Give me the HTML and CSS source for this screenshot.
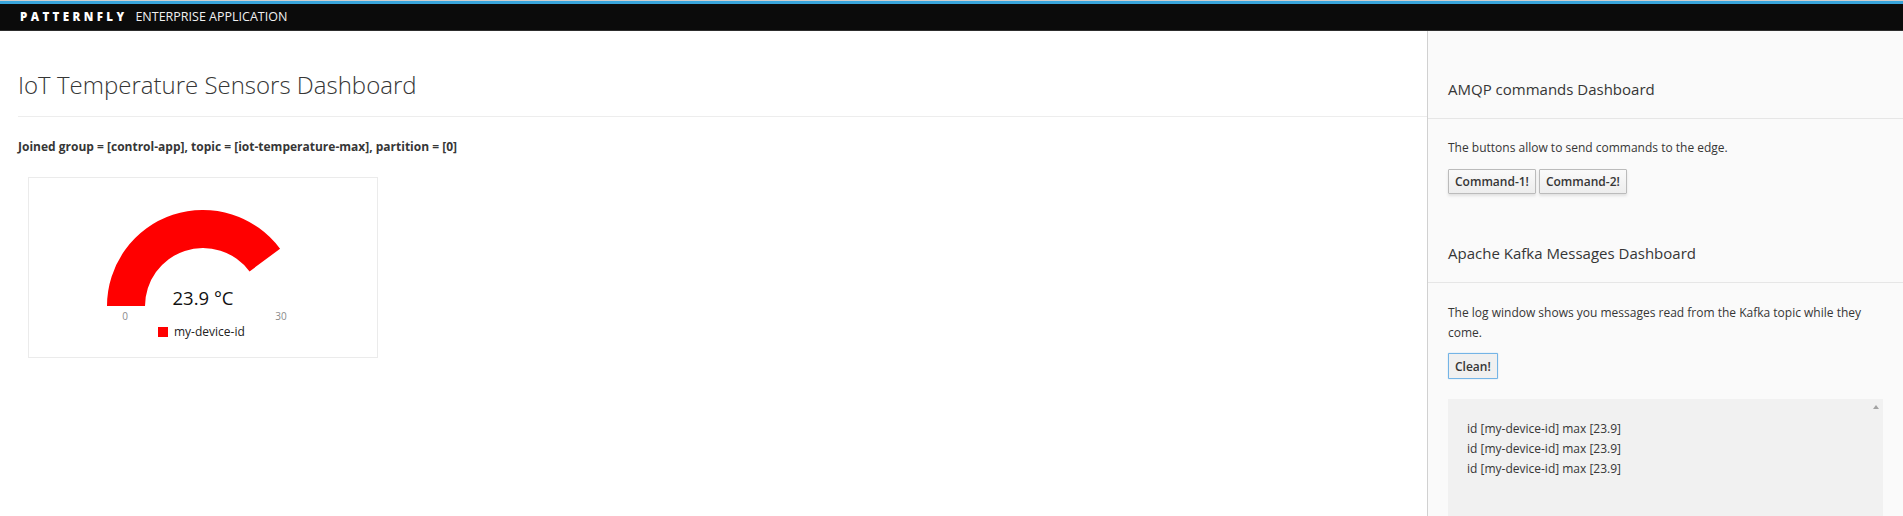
FILE: index.html
```html
<!DOCTYPE html>
<html lang="en">
<head>
<meta charset="utf-8">
<title>IoT Temperature Sensors Dashboard</title>
<link rel="stylesheet" href="styles.css">
</head>
<body>
<header class="navbar">
  <span class="brand-name">PATTERNFLY</span><span class="brand-app">ENTERPRISE APPLICATION</span>
</header>
<div class="layout">
  <main class="main">
    <h1 class="page-title">IoT Temperature Sensors Dashboard</h1>
    <p class="joined">Joined group = [control-app], topic = [iot-temperature-max], partition = [0]</p>
    <div class="gauge-card">
      <svg class="gauge" width="348" height="179" viewBox="0 0 348 179">
        <path d="M78,128 A96,96 0 0 1 251.07,70.75 L220.56,93.41 A58,58 0 0 0 116,128 Z" fill="#ff0000"/>
        <text class="gauge-value" x="174" y="127" text-anchor="middle">23.9 °C</text>
        <text class="gauge-label" x="96" y="142" text-anchor="middle">0</text>
        <text class="gauge-label" x="252" y="142" text-anchor="middle">30</text>
        <rect x="129" y="149" width="10" height="10" fill="#ff0000"/>
        <text class="gauge-legend" x="145" y="158">my-device-id</text>
      </svg>
    </div>
  </main>
  <aside class="sidebar">
    <section class="side-section">
      <h2 class="side-title">AMQP commands Dashboard</h2>
      <div class="side-body">
        <p class="side-text">The buttons allow to send commands to the edge.</p>
        <div class="btn-row">
          <button class="btn">Command-1!</button>
          <button class="btn">Command-2!</button>
        </div>
      </div>
    </section>
    <section class="side-section kafka">
      <h2 class="side-title">Apache Kafka Messages Dashboard</h2>
      <div class="side-body">
        <p class="side-text">The log window shows you messages read from the Kafka topic while they come.</p>
        <div class="btn-row">
          <button class="btn btn-focus">Clean!</button>
        </div>
        <div class="log">
          <span class="scroll-up"></span>
          <div class="log-line">id [my-device-id] max [23.9]</div>
          <div class="log-line">id [my-device-id] max [23.9]</div>
          <div class="log-line">id [my-device-id] max [23.9]</div>
        </div>
      </div>
    </section>
  </aside>
</div>
</body>
</html>
```
FILE: styles.css
```css
html, body {
  margin: 0;
  padding: 0;
}
body {
  font-family: "Open Sans", "Noto Sans", "Liberation Sans", sans-serif;
  font-size: 12px;
  color: #363636;
  background: #fff;
  overflow: hidden;
}
.navbar {
  display: flex;
  align-items: center;
  height: 26px;
  padding-left: 20px;
  background: #0b0b0b;
  border-top: 3px solid #39a5dc;
  border-bottom: 1px solid #2d2d2d;
  box-shadow: 0 -1px 0 #cfcfcf;
  margin-top: 1px;
}
.brand-name {
  color: #fff;
  font-weight: 800;
  font-size: 11.5px;
  letter-spacing: 3.4px;
  line-height: 1;
}
.brand-app {
  color: #f0f0f0;
  font-size: 12.5px;
  font-weight: 400;
  margin-left: 8px;
  line-height: 1;
}
.layout {
  display: flex;
  align-items: stretch;
  height: 485px;
}
.main {
  flex: 1;
  padding-left: 18px;
  min-width: 0;
}
.page-title {
  margin: 40px 0 0 0;
  font-size: 24px;
  font-weight: 300;
  line-height: 28px;
  color: #363636;
  padding-bottom: 17px;
  border-bottom: 1px solid #ededed;
}
.joined {
  margin: 20px 0 0 0;
  font-weight: 700;
  line-height: 20px;
}
.gauge-card {
  margin: 20px 0 0 10px;
  width: 348px;
  height: 179px;
  border: 1px solid #ebebeb;
  background: #fff;
}
.gauge {
  display: block;
}
.gauge-value {
  font-family: "Open Sans", "Noto Sans", sans-serif;
  font-size: 18.5px;
  fill: #111;
}
.gauge-label {
  font-family: "Open Sans", "Noto Sans", sans-serif;
  font-size: 10px;
  fill: #8a8a8a;
}
.gauge-legend {
  font-family: "Open Sans", "Noto Sans", sans-serif;
  font-size: 12px;
  fill: #222;
}
.sidebar {
  width: 475px;
  flex: none;
  background: #fafafa;
  border-left: 1px solid #d1d1d1;
}
.side-title {
  margin: 0;
  padding: 48px 20px 19px 20px;
  font-size: 15px;
  font-weight: 400;
  line-height: 20px;
  color: #363636;
  border-bottom: 1px solid #e6e6e6;
}
.kafka .side-title {
  padding-top: 49px;
}
.side-body {
  padding: 0 20px;
}
.side-text {
  margin: 19px 0 0 0;
  line-height: 20px;
}
.kafka .side-text {
  margin-top: 20px;
}
.btn-row {
  display: flex;
  gap: 3px;
  margin-top: 11px;
}
.kafka .btn-row {
  margin-top: 10px;
}
.btn {
  font-family: "Open Sans", "Noto Sans", sans-serif;
  font-size: 12px;
  font-weight: 600;
  color: #363636;
  height: 25px;
  padding: 0 6px;
  border: 1px solid #bbb;
  border-radius: 1px;
  background: linear-gradient(#fafafa, #ededed);
  box-shadow: 0 2px 3px rgba(3, 3, 3, 0.1);
}
.btn-focus {
  height: 26px;
  border-color: #74b4e6;
  background: #f0f0f0;
  box-shadow: 0 0 1px #74b4e6;
}
.log {
  position: relative;
  margin-top: 20px;
  height: 200px;
  padding: 20px 19px;
  background: #f1f1f1;
}
.log-line {
  line-height: 20px;
}
.scroll-up {
  position: absolute;
  top: 6px;
  right: 4px;
  width: 0;
  height: 0;
  border-left: 3.5px solid transparent;
  border-right: 3.5px solid transparent;
  border-bottom: 4px solid #a3a3a3;
}
```
